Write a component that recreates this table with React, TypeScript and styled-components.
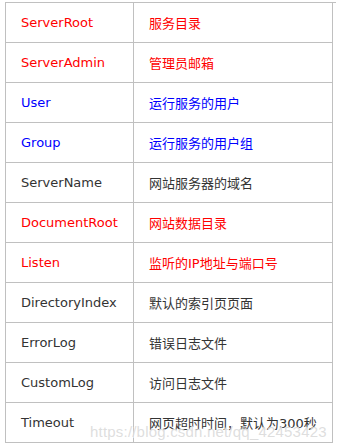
import React from 'react';
import styled, { createGlobalStyle } from 'styled-components';

const GlobalStyle = createGlobalStyle`
  html, body {
    margin: 0;
    padding: 0;
    background: #ffffff;
  }
`;

const Page = styled.div`
  position: relative;
  padding: 2px 0 0 5px;
`;

const Table = styled.div`
  display: grid;
  grid-template-columns: 128px 199px;
  width: 330px;
  border-top: 1px solid #c0c0c0;
  border-left: 1px solid #c0c0c0;
  font-family: "DejaVu Sans", Verdana, "Noto Sans CJK SC", sans-serif;
  font-size: 13px;
`;

type Tone = 'red' | 'blue' | 'dark';

const colors: Record<Tone, string> = {
  red: '#ff0000',
  blue: '#0000ff',
  dark: '#333333',
};

const Cell = styled.div<{ $tone: Tone }>`
  height: 39px;
  display: flex;
  align-items: center;
  padding-left: 15px;
  border-right: 1px solid #c0c0c0;
  border-bottom: 1px solid #c0c0c0;
  color: ${(p) => colors[p.$tone]};
  white-space: nowrap;
  overflow: hidden;
`;

const Watermark = styled.div`
  position: absolute;
  left: 90px;
  top: 423px;
  font-family: "Liberation Sans", Arial, sans-serif;
  font-size: 15px;
  color: rgba(200, 200, 200, 0.6);
  text-shadow: 0 0 1px #fff, 1px 1px 0 rgba(255, 255, 255, 0.8);
  letter-spacing: 0.2px;
  pointer-events: none;
`;

const rows: { key: string; desc: string; tone: Tone }[] = [
  { key: 'ServerRoot', desc: '服务目录', tone: 'red' },
  { key: 'ServerAdmin', desc: '管理员邮箱', tone: 'red' },
  { key: 'User', desc: '运行服务的用户', tone: 'blue' },
  { key: 'Group', desc: '运行服务的用户组', tone: 'blue' },
  { key: 'ServerName', desc: '网站服务器的域名', tone: 'dark' },
  { key: 'DocumentRoot', desc: '网站数据目录', tone: 'red' },
  { key: 'Listen', desc: '监听的IP地址与端口号', tone: 'red' },
  { key: 'DirectoryIndex', desc: '默认的索引页页面', tone: 'dark' },
  { key: 'ErrorLog', desc: '错误日志文件', tone: 'dark' },
  { key: 'CustomLog', desc: '访问日志文件', tone: 'dark' },
  { key: 'Timeout', desc: '网页超时时间，默认为300秒', tone: 'dark' },
];

export default function App() {
  return (
    <Page>
      <GlobalStyle />
      <Table>
        {rows.map((r) => (
          <React.Fragment key={r.key}>
            <Cell $tone={r.tone}>{r.key}</Cell>
            <Cell $tone={r.tone}>{r.desc}</Cell>
          </React.Fragment>
        ))}
      </Table>
      <Watermark>https://blog.csdn.net/qq_42453423</Watermark>
    </Page>
  );
}
